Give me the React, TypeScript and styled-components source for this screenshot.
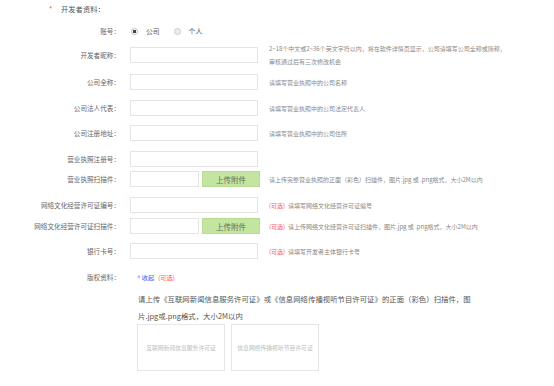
import styled, { createGlobalStyle } from 'styled-components';

const GlobalStyle = createGlobalStyle`
    body {
        margin: 0;
        background: #fff;
        font-family: "Noto Sans CJK SC", "Noto Sans", sans-serif;
    }
`

interface FieldRow {
    label: string;
    mt: number;
    upload?: boolean;
    optional?: boolean;
    hint?: string[];
}

const rows: FieldRow[] = [
    { label: "开发者昵称：", mt: 8, hint: ["2~18个中文或2~36个英文字符以内，将在软件详情页显示，公司请填写公司全称或简称，", "审核通过后有三次修改机会"] },
    { label: "公司全称：", mt: 11, hint: ["请填写营业执照中的公司名称"] },
    { label: "公司法人代表：", mt: 10, hint: ["请填写营业执照中的公司法定代表人"] },
    { label: "公司注册地址：", mt: 9, hint: ["请填写营业执照中的公司住所"] },
    { label: "营业执照注册号：", mt: 10 },
    { label: "营业执照扫描件：", mt: 4, upload: true, hint: ["请上传完整营业执照的正面（彩色）扫描件，图片.jpg 或 .png格式，大小2M以内"] },
    { label: "网络文化经营许可证编号：", mt: 10, optional: true, hint: ["请填写网络文化经营许可证编号"] },
    { label: "网络文化经营许可证扫描件：", mt: 5, upload: true, optional: true, hint: ["请上传网络文化经营许可证扫描件，图片.jpg 或 .png格式，大小2M以内"] },
    { label: "银行卡号：", mt: 9, optional: true, hint: ["请填写开发者主体银行卡号"] },
]

export default function App() {
    return (
        <>
            <GlobalStyle />
            <Page>
                <Header>
                    <Star>*</Star>
                    <span>开发者资料：</span>
                </Header>

                <Row $mt={6}>
                    <Label>账号：</Label>
                    <Radios>
                        <RadioOption><Radio $checked />公司</RadioOption>
                        <RadioOption><Radio />个人</RadioOption>
                    </Radios>
                </Row>

                {rows.map((row) => (
                    <Row $mt={row.mt} key={row.label}>
                        <Label>{row.label}</Label>
                        {row.upload ? (
                            <Upload>
                                <Input $small />
                                <UploadButton>上传附件</UploadButton>
                            </Upload>
                        ) : (
                            <Input />
                        )}
                        {row.hint && (
                            <Hint $lines={row.hint.length}>
                                {row.optional && <Optional>(可选)</Optional>}
                                {row.hint.map((line, i) => (
                                    <span key={i}>{i > 0 && <br />}{line}</span>
                                ))}
                            </Hint>
                        )}
                    </Row>
                ))}

                <Row $mt={10}>
                    <Label>版权资料：</Label>
                    <Toggle>
                        <Collapse>^ 收起</Collapse>
                        <Optional>(可选)</Optional>
                    </Toggle>
                </Row>

                <Copyright>
                    <Paragraph>
                        请上传《互联网新闻信息服务许可证》或《信息网络传播视听节目许可证》的正面（彩色）扫描件，图片.jpg或.png格式，大小2M以内
                    </Paragraph>
                    <Boxes>
                        <UploadBox>互联网新闻信息服务许可证</UploadBox>
                        <UploadBox>信息网络传播视听节目许可证</UploadBox>
                    </Boxes>
                </Copyright>
            </Page>
        </>
    )
}

const Page = styled.div`
    width: 554px;
    padding-top: 1px;
    display: flex;
    flex-direction: column;
`

const Header = styled.div`
    height: 16px;
    display: flex;
    align-items: center;
    padding-left: 49px;
    font-size: 7.3px;
    color: #555;
`

const Star = styled.span`
    color: #f45;
    width: 12px;
`

const Row = styled.div<{ $mt: number }>`
    margin-top: ${({ $mt }) => $mt}px;
    height: 16px;
    display: grid;
    grid-template-columns: 130px 139px 1fr;
    grid-template-rows: 16px;
    align-items: center;
`

const Label = styled.div`
    text-align: right;
    padding-right: 10px;
    font-size: 6.6px;
    color: #666;
    white-space: nowrap;
`

const Radios = styled.div`
    display: flex;
    align-items: center;
    gap: 14px;
    padding-left: 1px;
`

const RadioOption = styled.label`
    display: flex;
    align-items: center;
    gap: 8px;
    font-size: 6.8px;
    color: #555;
`

const Radio = styled.span<{ $checked?: boolean }>`
    width: 5px;
    height: 5px;
    border-radius: 50%;
    border: 1px solid ${({ $checked }) => ($checked ? '#bbb' : '#ccc')};
    background: ${({ $checked }) => ($checked ? 'radial-gradient(circle, #444 0 1.5px, #fff 2px)' : '#eee')};
`

const Input = styled.div<{ $small?: boolean }>`
    box-sizing: border-box;
    width: ${({ $small }) => ($small ? '69px' : '128px')};
    height: 16px;
    border: 1px solid #e4e4e4;
    background: #fff;
`

const Upload = styled.div`
    display: flex;
    align-items: center;
    gap: 3px;
`

const UploadButton = styled.div`
    box-sizing: border-box;
    width: 58px;
    height: 16px;
    background: #c4e4a2;
    border: 1px solid #b8dc92;
    display: flex;
    align-items: center;
    justify-content: center;
    font-size: 7.5px;
    color: #5f6f55;
`

const Hint = styled.div<{ $lines: number }>`
    font-size: 6px;
    line-height: 13px;
    color: #888;
    white-space: nowrap;
    margin: ${({ $lines }) => -(($lines - 1) * 13) / 2}px 0;
`

const Optional = styled.span`
    color: #f55;
    margin-right: 3px;
`

const Toggle = styled.div`
    padding-left: 7px;
    font-size: 6.2px;
`

const Collapse = styled.span`
    color: #4a55ff;
    margin-right: 4px;
`

const Copyright = styled.div`
    margin-top: 5px;
    padding-left: 138px;
    display: flex;
    flex-direction: column;
`

const Paragraph = styled.p`
    margin: 0;
    width: 340px;
    font-size: 7.4px;
    line-height: 17px;
    color: #555;
`

const Boxes = styled.div`
    display: flex;
    gap: 6px;
    margin-left: -1px;
`

const UploadBox = styled.div`
    box-sizing: border-box;
    width: 88px;
    height: 47px;
    border: 1px solid #e6e6e6;
    display: flex;
    align-items: center;
    justify-content: center;
    font-size: 5.8px;
    color: #bbb;
    white-space: nowrap;
`
